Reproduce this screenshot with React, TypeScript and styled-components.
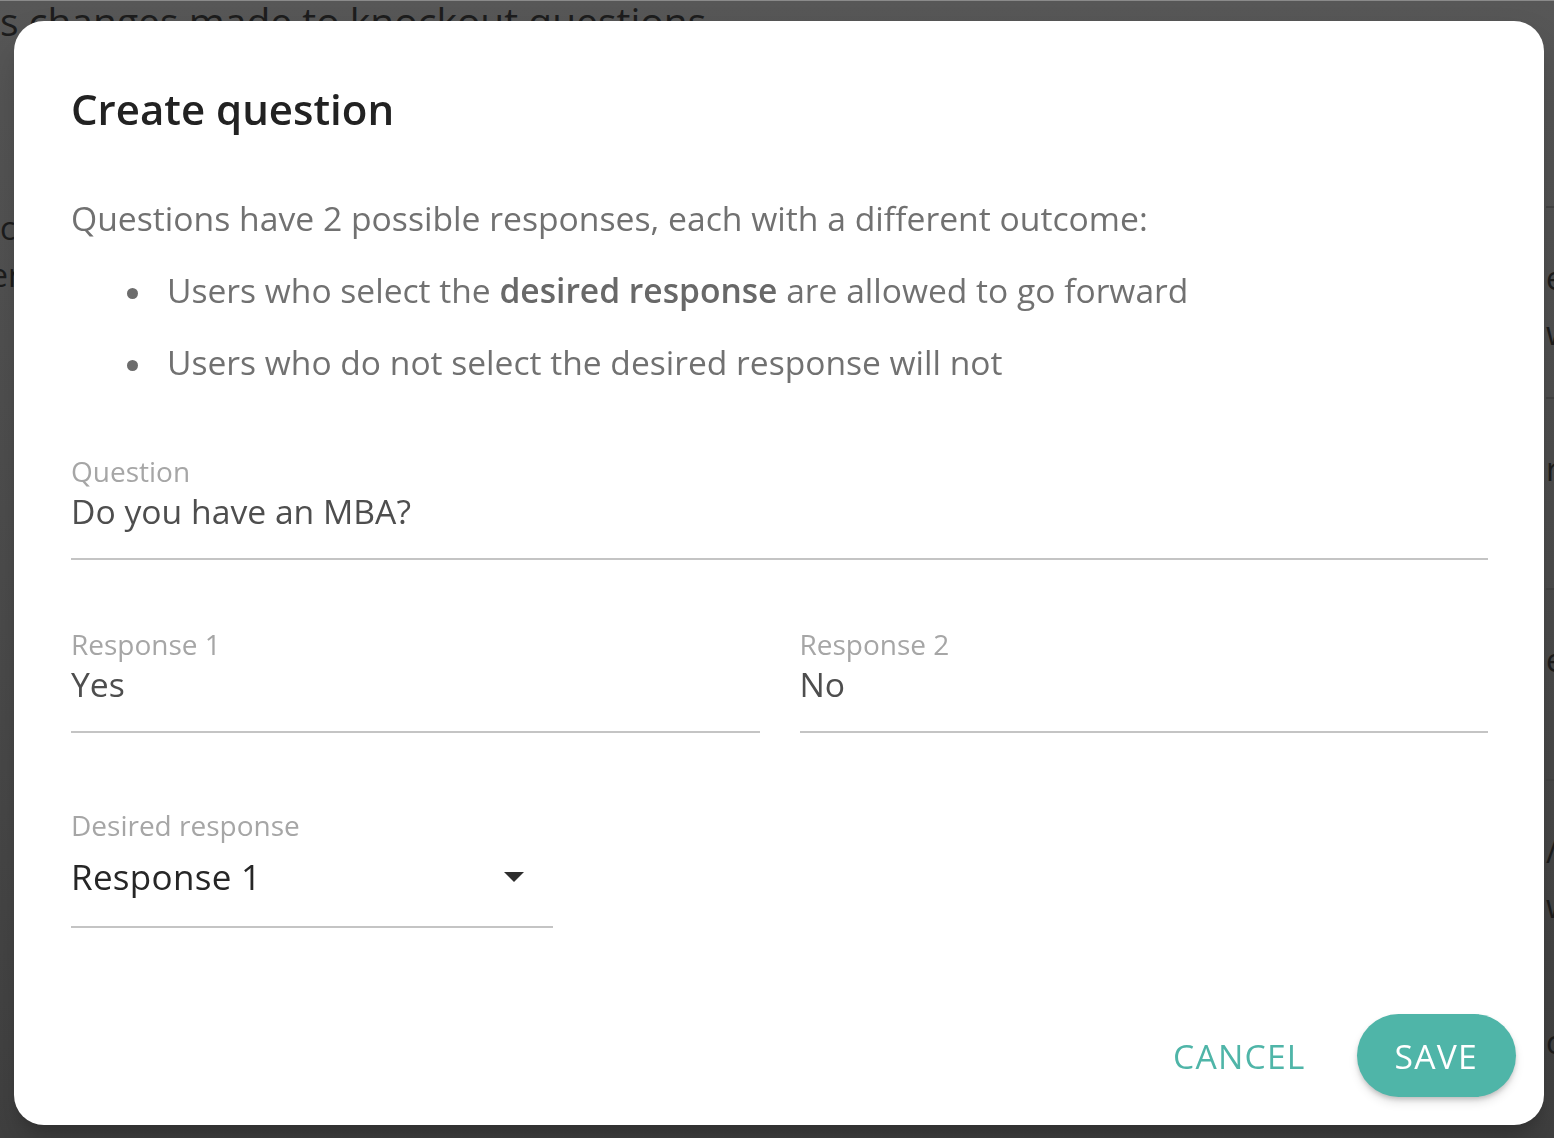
import React from "react";
import styled, { createGlobalStyle } from "styled-components";

const GlobalStyle = createGlobalStyle`
  html, body {
    margin: 0;
    padding: 0;
    overflow: hidden;
  }
  body {
    font-family: "Open Sans", "Noto Sans", sans-serif;
  }
  * { box-sizing: border-box; }
`;

const TEAL = "#4fb5a8";

/* ---------- page behind the dialog ---------- */

const Page = styled.div`
  height: 100vh;
  overflow: hidden;
  background: linear-gradient(180deg, #575757 0%, #4c4c4c 55%, #414141 100%);
  border-top: 1px solid #8a8a8a;
  color: #1d1d1d;
  font-family: "Open Sans", "Noto Sans", sans-serif;
`;

const PageHeading = styled.h2`
  margin: 0 0 0 0;
  font-size: 39px;
  font-weight: 400;
  line-height: 39px;
  white-space: nowrap;
`;

const PageColumns = styled.div`
  display: flex;
  justify-content: space-between;
`;

const SideNotes = styled.div`
  width: 14px;
  margin-top: 164px;
  font-size: 32px;
  line-height: 47px;
  white-space: nowrap;
`;

const SideLine = styled.div<{ $shift?: number }>`
  margin-left: ${(p) => p.$shift ?? 0}px;
`;

const RowList = styled.div`
  width: 8px;
  margin-top: 166px;
  font-size: 32px;
  white-space: nowrap;
`;

const ListRow = styled.div`
  height: 191px;
  border-top: 2px solid #444444;
  padding-top: 42px;
  line-height: 55px;
`;

/* ---------- dialog ---------- */

const Overlay = styled.div`
  position: fixed;
  inset: 0;
  display: flex;
  align-items: flex-start;
  justify-content: flex-start;
  padding: 21px 0 0 14px;
`;

const Dialog = styled.div`
  width: 1530px;
  height: 1104px;
  background: #ffffff;
  border-radius: 30px;
  box-shadow: 0 11px 15px -7px rgba(0, 0, 0, 0.2), 0 24px 38px 3px rgba(0, 0, 0, 0.14);
  display: flex;
  flex-direction: column;
  font-family: "Open Sans", "Noto Sans", sans-serif;
`;

const Body = styled.div`
  padding: 63px 56px 0 57px;
`;

const Title = styled.h1`
  margin: 0;
  font-size: 42px;
  font-weight: 600;
  line-height: 50px;
  color: #222222;
`;

const Description = styled.p`
  margin: 61px 0 0 0;
  font-size: 33.7px;
  line-height: 46px;
  color: #717171;
`;

const Bullets = styled.ul`
  margin: 26px 0 0 0;
  padding: 0;
  list-style: none;
`;

const Bullet = styled.li`
  display: flex;
  align-items: flex-start;
  padding-left: 56px;
  font-size: 33.6px;
  line-height: 46px;
  color: #717171;
  & + & {
    margin-top: 26px;
  }
  strong {
    font-weight: 650;
    color: #686868;
  }
`;

const Dot = styled.span`
  flex: none;
  width: 11px;
  height: 11px;
  margin: 21px 29px 0 0;
  border-radius: 50%;
  background: #6c6c6c;
`;

const Field = styled.div<{ $top: number; $width?: string }>`
  margin-top: ${(p) => p.$top}px;
  width: ${(p) => p.$width ?? "auto"};
  border-bottom: 2px solid #c4c4c4;
`;

const FieldLabel = styled.div`
  font-size: 28px;
  line-height: 33px;
  color: #a6a6a6;
`;

const FieldValue = styled.div`
  font-size: 33.7px;
  line-height: 46px;
  color: #4e4e4e;
  padding-bottom: 24px;
`;

const FieldRow = styled.div`
  display: grid;
  grid-template-columns: 1fr 1fr;
  column-gap: 40px;
`;

const SelectValue = styled.div`
  display: flex;
  align-items: center;
  justify-content: space-between;
  padding: 12px 29px 26px 0;
  font-size: 35px;
  line-height: 46px;
  letter-spacing: 0.3px;
  color: #262626;
`;

const Caret = styled.span`
  width: 0;
  height: 0;
  border-left: 10px solid transparent;
  border-right: 10px solid transparent;
  border-top: 10px solid #2e2e2e;
`;

const Actions = styled.div`
  margin-top: auto;
  display: flex;
  justify-content: flex-end;
  align-items: center;
  gap: 25px;
  padding: 0 28px 28px 0;
`;

const Button = styled.button<{ $primary?: boolean }>`
  height: 83px;
  padding: 0 ${(p) => (p.$primary ? 38 : 26)}px;
  border: none;
  border-radius: 42px;
  font-family: "Open Sans", "Noto Sans", sans-serif;
  font-size: 33.7px;
  font-weight: 500;
  letter-spacing: 1.2px;
  cursor: pointer;
  background: ${(p) => (p.$primary ? TEAL : "transparent")};
  color: ${(p) => (p.$primary ? "#ffffff" : TEAL)};
  box-shadow: ${(p) =>
    p.$primary ? "0 3px 5px -1px rgba(0,0,0,0.2), 0 6px 10px 0 rgba(0,0,0,0.1)" : "none"};
`;

export default function App() {
  return (
    <>
      <GlobalStyle />
      <Page>
        <PageHeading>s changes made to knockout questions</PageHeading>
        <PageColumns>
          <SideNotes>
            <SideLine>coverage</SideLine>
            <SideLine $shift={-10}>er</SideLine>
          </SideNotes>
          <RowList>
            <ListRow>
              <div>each</div>
              <div>with</div>
            </ListRow>
            <ListRow>
              <div>response</div>
            </ListRow>
            <ListRow>
              <div>edit</div>
            </ListRow>
            <ListRow>
              <div>/</div>
              <div>with</div>
            </ListRow>
            <ListRow>
              <div>cover</div>
            </ListRow>
          </RowList>
        </PageColumns>
      </Page>

      <Overlay>
        <Dialog role="dialog" aria-labelledby="create-question-title">
          <Body>
            <Title id="create-question-title">Create question</Title>
            <Description>
              Questions have 2 possible responses, each with a different outcome:
            </Description>
            <Bullets>
              <Bullet>
                <Dot />
                <span>
                  Users who select the <strong>desired response</strong> are allowed to go
                  forward
                </span>
              </Bullet>
              <Bullet>
                <Dot />
                <span>Users who do not select the desired response will not</span>
              </Bullet>
            </Bullets>

            <Field $top={70}>
              <FieldLabel>Question</FieldLabel>
              <FieldValue>Do you have an MBA?</FieldValue>
            </Field>

            <FieldRow>
              <Field $top={68}>
                <FieldLabel>Response 1</FieldLabel>
                <FieldValue>Yes</FieldValue>
              </Field>
              <Field $top={68}>
                <FieldLabel>Response 2</FieldLabel>
                <FieldValue>No</FieldValue>
              </Field>
            </FieldRow>

            <Field $top={76} $width="482px">
              <FieldLabel>Desired response</FieldLabel>
              <SelectValue>
                <span>Response 1</span>
                <Caret />
              </SelectValue>
            </Field>
          </Body>

          <Actions>
            <Button type="button">CANCEL</Button>
            <Button type="button" $primary>
              SAVE
            </Button>
          </Actions>
        </Dialog>
      </Overlay>
    </>
  );
}
